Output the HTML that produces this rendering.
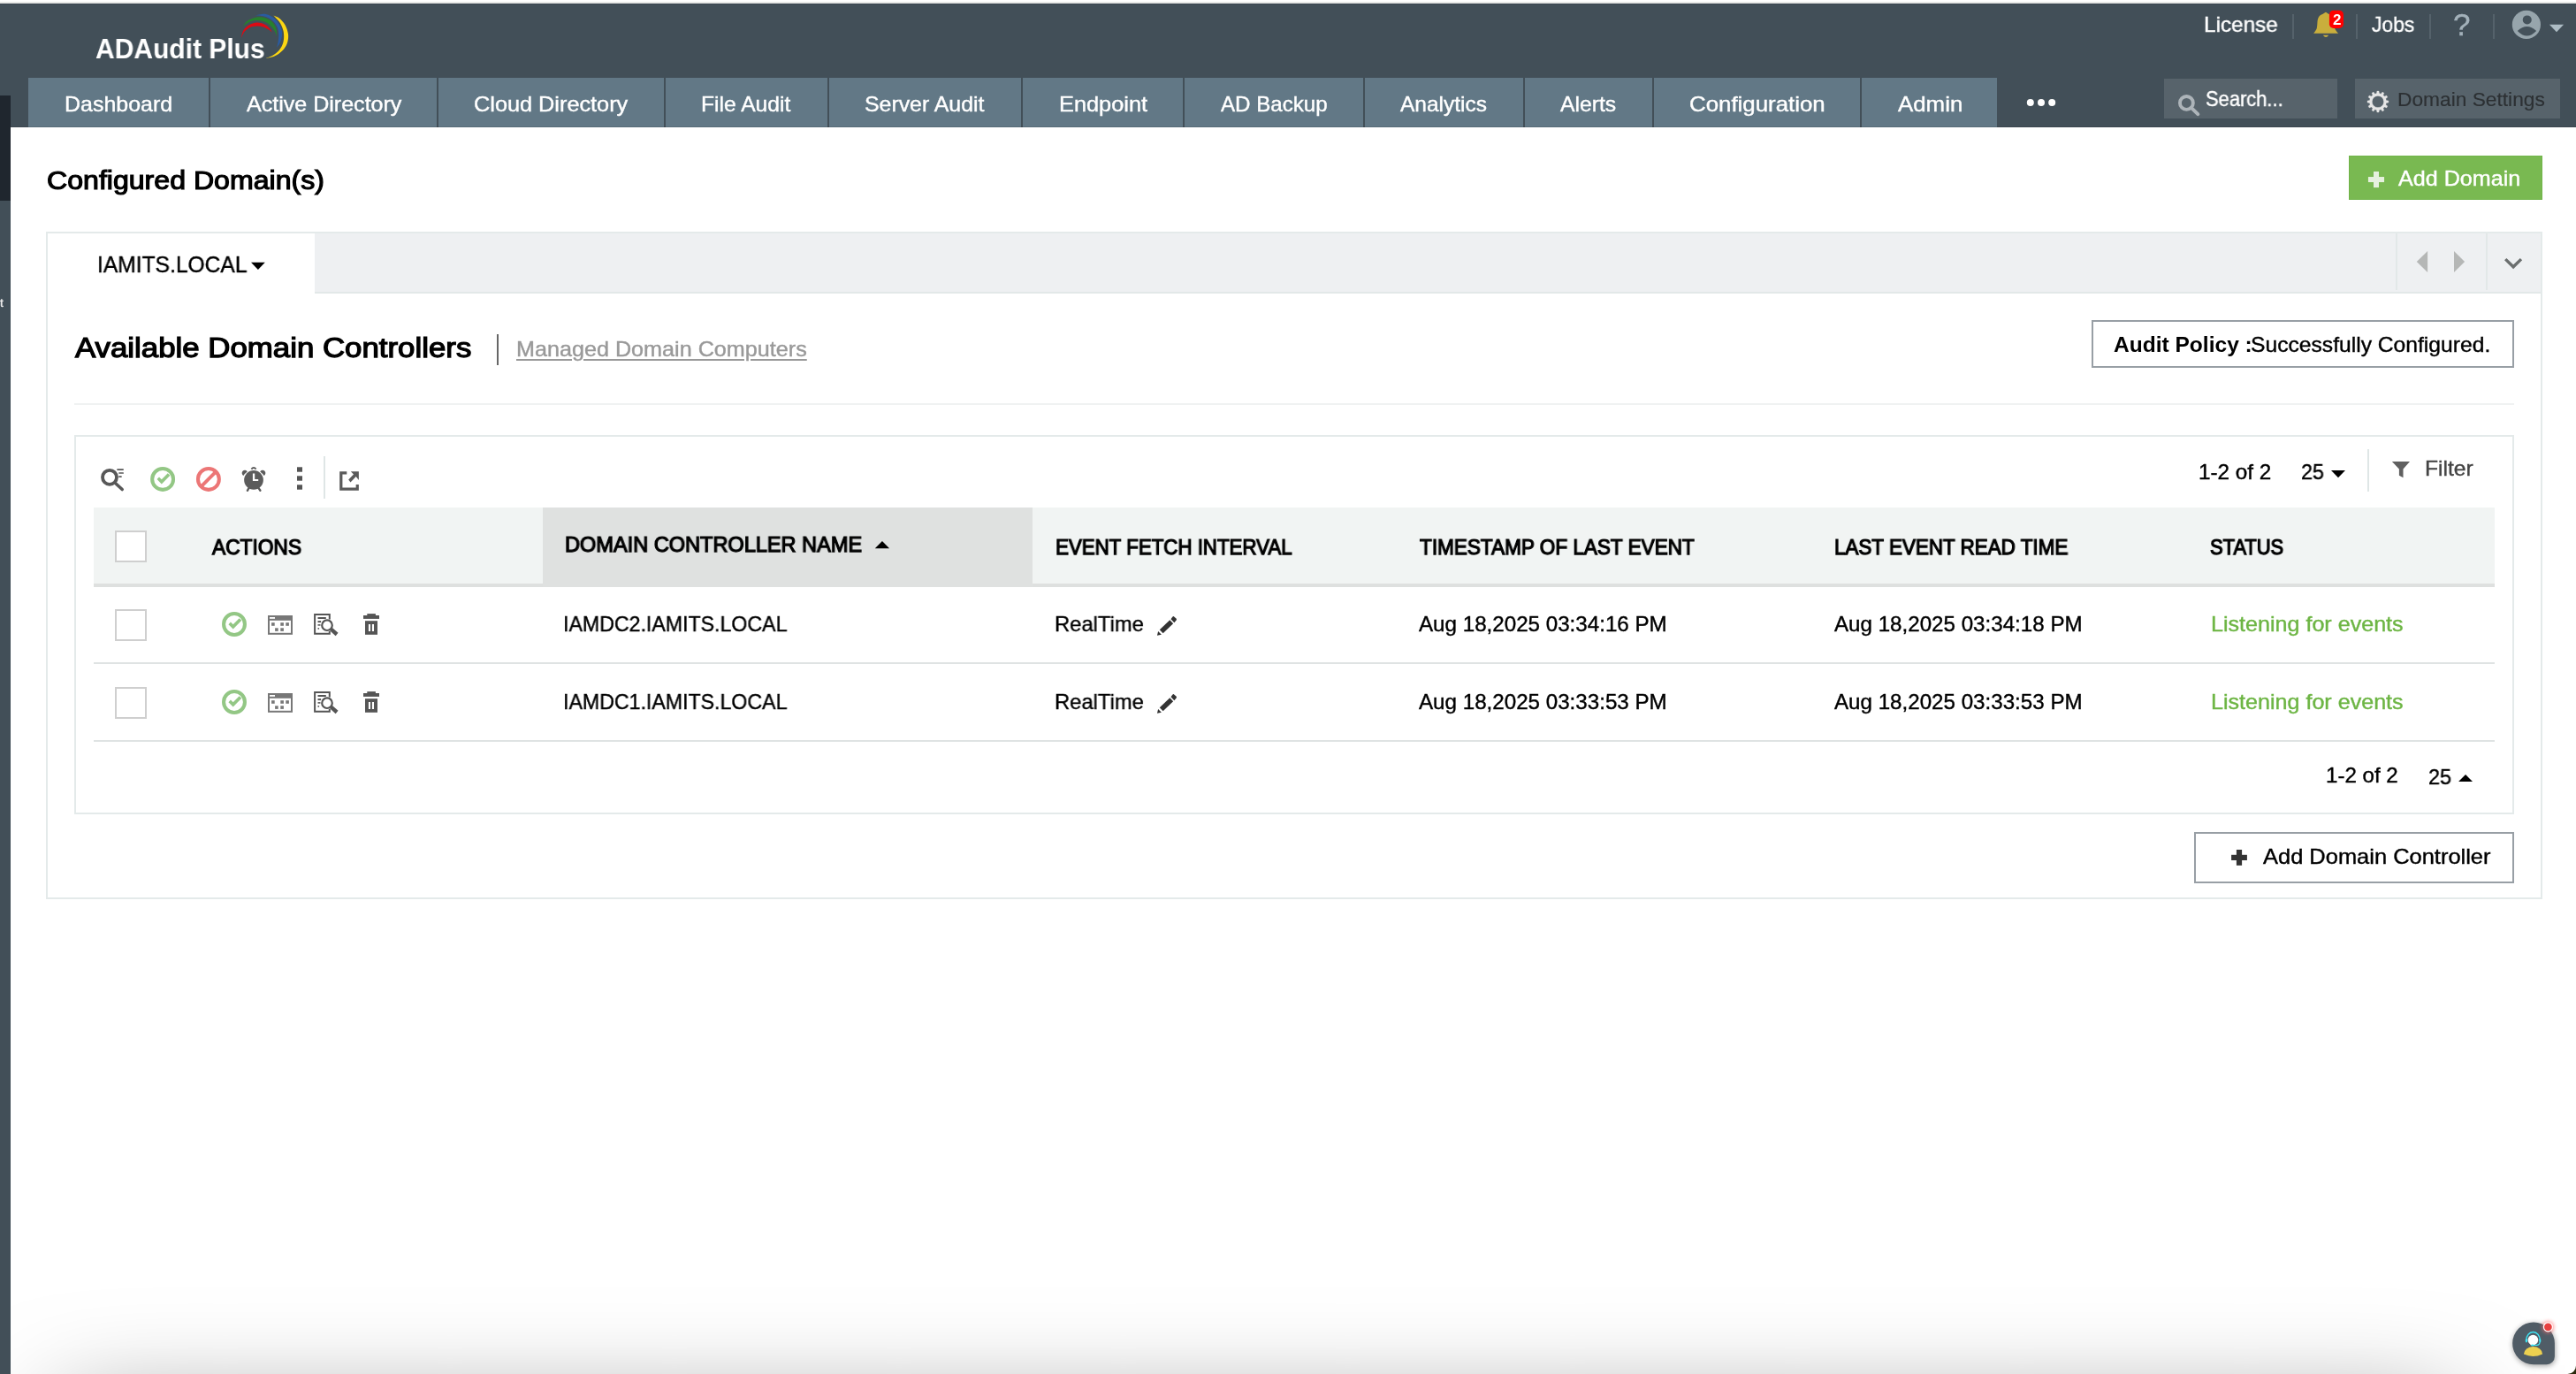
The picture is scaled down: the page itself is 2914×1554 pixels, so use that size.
<!DOCTYPE html>
<html lang="en">
<head>
<meta charset="utf-8">
<title>ADAudit Plus - Configured Domain(s)</title>
<style>
html,body{margin:0;padding:0;}
html,body{width:2914px;height:1554px;overflow:hidden;background:#fff;}
#page{position:relative;width:2914px;height:1554px;overflow:hidden;background:#fff;font-family:"Liberation Sans",sans-serif;color:#000;}
.a{position:absolute;}
.t{position:absolute;white-space:nowrap;margin:0;padding:0;font-weight:400;will-change:transform;}
svg{position:absolute;overflow:visible;}
</style>
</head>
<body>
<div id="page">
<!-- top browser edge -->
<div class="a" style="left:0;top:0;width:2914px;height:2px;background:#fff"></div>
<div class="a" style="left:0;top:2px;width:2914px;height:2px;background:#e8e9e7"></div>
<!-- header -->
<div id="header" class="a" style="left:0;top:4px;width:2914px;height:140px;background:#424f58;border-top:1px solid #3a4650;box-sizing:border-box"></div>
<!-- left strip (other window sliver) -->
<div class="a" style="left:0;top:144px;width:12px;height:1410px;background:#424f58"></div>
<div class="a" style="left:0;top:108px;width:12px;height:119px;background:#1f262e"></div>
<!-- nav -->
<div id="nav" class="a" style="left:32px;top:88px;width:2227px;height:56px;background:#627886"></div>
<div class="a" style="left:236px;top:88px;width:2px;height:56px;background:#424f58"></div>
<div class="a" style="left:494px;top:88px;width:2px;height:56px;background:#424f58"></div>
<div class="a" style="left:751px;top:88px;width:2px;height:56px;background:#424f58"></div>
<div class="a" style="left:936px;top:88px;width:2px;height:56px;background:#424f58"></div>
<div class="a" style="left:1155px;top:88px;width:2px;height:56px;background:#424f58"></div>
<div class="a" style="left:1338px;top:88px;width:2px;height:56px;background:#424f58"></div>
<div class="a" style="left:1542px;top:88px;width:2px;height:56px;background:#424f58"></div>
<div class="a" style="left:1723px;top:88px;width:2px;height:56px;background:#424f58"></div>
<div class="a" style="left:1869px;top:88px;width:2px;height:56px;background:#424f58"></div>
<div class="a" style="left:2104px;top:88px;width:2px;height:56px;background:#424f58"></div>
<div class="a" style="left:12px;top:143px;width:2902px;height:1px;background:rgba(0,0,0,0.10)"></div>
<!-- more dots -->
<div class="a" style="left:2305px;top:111.8px;width:8.2px;height:8.2px;border-radius:50%;background:#fff;box-shadow:-12.2px 0 0 #fff,12.2px 0 0 #fff"></div>
<!-- search box & domain settings -->
<div class="a" style="left:2448px;top:89px;width:196px;height:45px;background:#57636b"></div>
<div class="a" style="left:2664px;top:89px;width:232px;height:45px;background:#57636b"></div>
<!-- header separators -->
<div class="a" style="left:2593px;top:16px;width:2px;height:28px;background:#55626b"></div>
<div class="a" style="left:2665px;top:16px;width:2px;height:28px;background:#55626b"></div>
<div class="a" style="left:2748px;top:16px;width:2px;height:28px;background:#55626b"></div>
<div class="a" style="left:2820px;top:16px;width:2px;height:28px;background:#55626b"></div>
<!--ICONS_HEADER-->

<!-- Add Domain button -->
<div class="a" style="left:2657px;top:176px;width:219px;height:50px;background:#79b951;border:1px solid #70b449;box-sizing:border-box"></div>

<!-- outer panel -->
<div class="a" style="left:52px;top:262px;width:2820px;height:751px;border:2px solid #e4eaea;background:#fff"></div>
<div class="a" style="left:356px;top:264px;width:2518px;height:66px;background:#eef0f2;border-bottom:2px solid #e2e8e8"></div>
<div class="a" style="left:2710px;top:264px;width:2px;height:64px;background:#e2e8e8"></div>
<div class="a" style="left:2812px;top:264px;width:2px;height:64px;background:#e2e8e8"></div>

<!-- title divider -->
<div class="a" style="left:562px;top:378px;width:2px;height:34.5px;background:#666"></div>
<!-- audit policy box -->
<div class="a" style="left:2366px;top:362px;width:474px;height:50px;border:2px solid #989fa5;background:#fff"></div>
<!-- hr -->
<div class="a" style="left:84px;top:456px;width:2760px;height:2px;background:#f0f2f2"></div>
<!-- inner panel -->
<div class="a" style="left:84px;top:492px;width:2756px;height:425px;border:2px solid #e4eaea;background:#fff"></div>
<!-- toolbar separators -->
<div class="a" style="left:366px;top:516px;width:2px;height:48px;background:#dfe6e6"></div>
<div class="a" style="left:2678px;top:508px;width:2px;height:48px;background:#dfe6e6"></div>
<!-- table header -->
<div class="a" style="left:106px;top:574px;width:2716px;height:86px;background:#f1f4f3"></div>
<div class="a" style="left:106px;top:660px;width:2716px;height:4px;background:#dee0df"></div>
<div class="a" style="left:614px;top:574px;width:554px;height:90px;background:#dfe1e0"></div>
<!-- row lines -->
<div class="a" style="left:106px;top:749px;width:2716px;height:2px;background:#dfe3e3"></div>
<div class="a" style="left:106px;top:837px;width:2716px;height:2px;background:#dfe3e3"></div>
<!-- checkboxes -->
<div class="a" style="left:130px;top:600px;width:32px;height:32px;border:2px solid #cfcfcf;background:#fff"></div>
<div class="a" style="left:130px;top:689px;width:32px;height:32px;border:2px solid #cfcfcf;background:#fff"></div>
<div class="a" style="left:130px;top:777px;width:32px;height:32px;border:2px solid #cfcfcf;background:#fff"></div>
<!-- add dc button -->
<div class="a" style="left:2482px;top:941px;width:358px;height:54px;border:2px solid #989fa5;background:#fff"></div>
<!-- bottom shadow -->
<div class="a" style="left:70px;top:1600px;width:2705px;height:100px;background:#888;box-shadow:0 0 120px rgba(0,0,0,0.51)"></div>
<div class="a" style="left:0;top:1400px;width:12px;height:154px;background:#424f58"></div>
<svg width="2914" height="1554" viewBox="0 0 2914 1554" style="left:0;top:0">
<g id="logo-arcs"><path d="M272.74,43.16 C273.16,41.72 273.84,36.96 275.29,34.50 C276.73,32.03 278.85,29.87 281.40,28.38 C283.95,26.90 287.69,25.75 290.57,25.58 C293.46,25.41 296.35,26.30 298.73,27.36 C301.10,28.42 303.31,30.42 304.84,31.95 C306.37,33.48 307.39,35.77 307.90,36.54 C307.22,36.03 305.52,34.50 303.82,33.48 C302.12,32.46 299.92,31.10 297.71,30.42 C295.50,29.74 293.04,29.32 290.57,29.40 C288.11,29.49 285.22,29.91 282.93,30.93 C280.64,31.95 278.51,33.48 276.82,35.52 C275.12,37.55 273.42,41.89 272.74,43.16 Z" fill="#dc0a14"/>
<path d="M274.78,29.91 C275.71,28.81 277.75,25.03 280.38,23.29 C283.01,21.55 287.18,19.93 290.57,19.46 C293.97,19.00 297.79,19.51 300.76,20.48 C303.74,21.46 306.45,23.24 308.41,25.32 C310.36,27.41 311.72,30.25 312.48,32.97 C313.25,35.69 312.91,40.19 312.99,41.63 C312.74,40.78 312.40,38.40 311.46,36.54 C310.53,34.67 309.26,32.33 307.39,30.42 C305.52,28.51 303.06,26.30 300.25,25.07 C297.45,23.84 293.55,23.07 290.57,23.03 C287.60,22.99 285.05,23.67 282.42,24.82 C279.79,25.96 276.05,29.06 274.78,29.91 Z" fill="#26812d"/>
<path d="M289.04,17.17 C291.00,16.96 297.11,15.22 300.76,15.90 C304.42,16.58 308.15,18.74 310.96,21.25 C313.76,23.75 316.22,27.87 317.58,30.93 C318.94,33.99 319.28,36.62 319.11,39.59 C318.94,42.56 317.58,46.39 316.56,48.76 C315.54,51.14 313.59,53.01 312.99,53.86 C313.25,52.84 314.14,50.12 314.52,47.75 C314.90,45.37 315.41,42.39 315.29,39.59 C315.16,36.79 314.90,33.61 313.76,30.93 C312.61,28.25 310.57,25.54 308.41,23.54 C306.24,21.55 303.99,20.02 300.76,18.96 C297.54,17.89 291.00,17.47 289.04,17.17 Z" fill="#2a5ba0"/>
<path d="M309.43,17.43 C310.53,17.98 313.84,18.91 316.05,20.74 C318.26,22.56 321.02,25.41 322.68,28.38 C324.33,31.35 325.56,35.35 325.99,38.57 C326.41,41.80 326.03,44.94 325.22,47.75 C324.42,50.55 323.10,53.01 321.15,55.39 C319.19,57.77 316.05,60.40 313.50,62.01 C310.96,63.63 307.98,64.43 305.86,65.07 C303.74,65.71 301.61,65.71 300.76,65.83 C302.04,65.32 305.86,64.35 308.41,62.78 C310.96,61.21 314.10,58.74 316.05,56.41 C318.00,54.07 319.28,51.31 320.13,48.76 C320.98,46.22 321.15,43.67 321.15,41.12 C321.15,38.57 320.98,36.20 320.13,33.48 C319.28,30.76 317.83,27.49 316.05,24.82 C314.27,22.14 310.53,18.66 309.43,17.43 Z" fill="#fcd612"/></g>
<g id="bell"><path d="M2617.11,37.85 C2617.65,37.06 2619.68,34.82 2620.38,33.12 C2621.08,31.42 2621.05,29.48 2621.29,27.66 C2621.53,25.84 2621.38,23.84 2621.84,22.20 C2622.29,20.56 2623.05,18.92 2624.02,17.83 C2624.99,16.74 2626.81,16.13 2627.66,15.65 C2628.51,15.16 2628.57,15.23 2629.12,14.92 C2629.66,14.60 2630.33,13.75 2630.94,13.75 C2631.54,13.75 2632.21,14.60 2632.76,14.92 C2633.30,15.23 2633.36,15.16 2634.21,15.65 C2635.06,16.13 2636.88,16.74 2637.85,17.83 C2638.82,18.92 2639.58,20.56 2640.04,22.20 C2640.49,23.84 2640.34,25.84 2640.58,27.66 C2640.82,29.48 2640.73,31.42 2641.49,33.12 C2642.25,34.82 2644.53,37.06 2645.13,37.85 Z" fill="#c9ae3c"/><path d="M2627.84,39.67 L2634.21,39.67 Q2631.01,44.40 2627.84,39.67 Z" fill="#c9ae3c"/><rect x="2634.9" y="11.8" width="16.1" height="20.2" rx="4.8" ry="4.8" fill="#ff0000"/></g>
<g id="user"><circle cx="2857.9" cy="27.9" r="16.1" fill="#97a5ac"/><circle cx="2858.75" cy="22.4" r="5" fill="#45525b"/><path d="M2847.8,34.9 Q2858.5,25.1 2869.1,34.9 Q2858.5,45.9 2847.8,34.9 Z" fill="#45525b"/><path d="M2883.9,27.8 L2900.1,27.8 L2892,36.2 Z" fill="#adbcc4"/></g>
<g id="hsearch"><circle cx="2473.4" cy="116.4" r="7.45" fill="none" stroke="#adb4b9" stroke-width="3.9"/><path d="M2479.3,122.3 L2486.3,129.2" stroke="#adb4b9" stroke-width="4" stroke-linecap="round" fill="none"/></g>
<g id="gear"><path d="M2688.46,105.62 L2688.88,103.05 L2691.02,103.05 L2691.44,105.62 L2693.35,106.13 L2695.00,104.12 L2696.85,105.18 L2695.93,107.62 L2697.33,109.02 L2699.77,108.10 L2700.83,109.95 L2698.82,111.60 L2699.33,113.51 L2701.90,113.93 L2701.90,116.07 L2699.33,116.49 L2698.82,118.40 L2700.83,120.05 L2699.77,121.90 L2697.33,120.98 L2695.93,122.38 L2696.85,124.82 L2695.00,125.88 L2693.35,123.87 L2691.44,124.38 L2691.02,126.95 L2688.88,126.95 L2688.46,124.38 L2686.55,123.87 L2684.90,125.88 L2683.05,124.82 L2683.97,122.38 L2682.57,120.98 L2680.13,121.90 L2679.07,120.05 L2681.08,118.40 L2680.57,116.49 L2678.00,116.07 L2678.00,113.93 L2680.57,113.51 L2681.08,111.60 L2679.07,109.95 L2680.13,108.10 L2682.57,109.02 L2683.97,107.62 L2683.05,105.18 L2684.90,104.12 L2686.55,106.13 Z M2696.55,115.00 A6.6,6.6 0 1 0 2683.35,115.00 A6.6,6.6 0 1 0 2696.55,115.00 Z" fill="#e6e6e6" fill-rule="evenodd" stroke="#e6e6e6" stroke-width="0.3" stroke-linejoin="round"/></g>
<g id="plus-w"><rect x="2678.95" y="200.05" width="18.10" height="6.00" fill="#e6f1de"/><rect x="2685.00" y="194.00" width="6.00" height="18.10" fill="#e6f1de"/></g>
<path d="M284.00,296.80 L299.80,296.80 L291.90,305.00 Z" fill="#000"/>
<path d="M2746.10,284.00 L2746.10,308.00 L2733.80,296.00 Z" fill="#b5b7b6"/>
<path d="M2776.00,284.00 L2776.00,308.00 L2788.10,296.00 Z" fill="#b5b7b6"/>
<path d="M2834.2,293.1 L2843.1,301.8 L2852.0,293.1" fill="none" stroke="#6b6f6f" stroke-width="3.4"/>
<g id="tsearch"><circle cx="124.0" cy="539.85" r="8.0" fill="none" stroke="#585858" stroke-width="3.8"/><path d="M130.0,546.0 L138.2,553.5" stroke="#585858" stroke-width="3.6" stroke-linecap="round"/><rect x="132.2" y="530.2" width="7.7" height="1.7" rx="0.6" fill="#585858"/><rect x="134.2" y="534.2" width="5.7" height="1.6" rx="0.6" fill="#585858"/><rect x="134.2" y="538.3" width="3.6" height="1.6" rx="0.6" fill="#585858"/></g>
<circle cx="184.1" cy="541.9" r="11.95" fill="none" stroke="#93c785" stroke-width="4.05"/><path d="M177.55,542.05 L180.02,539.43 L182.79,542.19 L189.78,535.20 L192.40,537.68 L182.79,547.43 Z" fill="#93c785"/>
<circle cx="235.9" cy="541.9" r="11.95" fill="none" stroke="#ec7676" stroke-width="4.05"/><path d="M227.45,550.35 L244.35,533.45" stroke="#ec7676" stroke-width="3.9"/>
<circle cx="287.0" cy="542.9" r="10.85" fill="#5c5c5c"/><path d="M279.80,533.40 A3.3,3.3 0 1 0 275.40,538.00 Q277.10,535.20 279.80,533.40 Z" fill="#5c5c5c"/><path d="M294.20,533.40 A3.3,3.3 0 1 1 298.60,538.00 Q296.90,535.20 294.20,533.40 Z" fill="#5c5c5c"/><path d="M284.40,530.60 Q287.00,527.30 289.60,530.60" fill="none" stroke="#5c5c5c" stroke-width="2.0"/><path d="M281.60,551.90 L279.90,554.80" stroke="#5c5c5c" stroke-width="2.4" stroke-linecap="round"/><path d="M292.40,551.90 L294.40,554.80" stroke="#5c5c5c" stroke-width="2.4" stroke-linecap="round"/><path d="M285.90,535.50 h2.3 v6.4 h4.0 v2.2 h-6.3 Z" fill="#fff"/>
<rect x="336" y="528.3" width="6" height="5.4" fill="#555"/><rect x="336" y="538.3" width="6" height="5.4" fill="#555"/><rect x="336" y="548.3" width="6" height="5.4" fill="#555"/>
<path d="M384.17,533.17 H392.3 V536.5 H387.4 V551.5 H402.66 V548.0 H405.86 V554.86 H384.17 Z" fill="#5a5a5a"/><path d="M396.8,533.17 L405.86,533.17 L405.86,542.9 L402.7,539.1 L396.5,545.5 L394.2,542.5 L400.0,536.5 Z" fill="#5a5a5a"/>
<path d="M989.80,620.20 L1006.10,620.20 L997.95,612.00 Z" fill="#000"/>
<path d="M2637.00,531.90 L2653.00,531.90 L2645.00,540.20 Z" fill="#000"/>
<path d="M2781.10,884.10 L2797.00,884.10 L2789.05,875.90 Z" fill="#000"/>
<path d="M2705.9,521.9 L2726,521.9 L2718.5,530.5 L2718.5,540.2 L2713.9,537.7 L2713.9,530.5 Z" fill="#606060"/>
<circle cx="265.0" cy="706.0" r="11.95" fill="none" stroke="#93c785" stroke-width="4.05"/><path d="M258.45,706.15 L260.92,703.53 L263.69,706.29 L270.68,699.30 L273.30,701.78 L263.69,711.53 Z" fill="#93c785"/>
<rect x="304" y="697" width="26" height="19.8" fill="#fff" stroke="#777" stroke-width="2"/><rect x="303" y="696" width="28" height="5.8" fill="#777"/><rect x="305" y="698" width="6" height="1.8" fill="#fff"/><rect x="307.1" y="704.2" width="3.6" height="3.6" fill="#777"/><rect x="317.3" y="704.2" width="3.6" height="3.6" fill="#777"/><rect x="323.3" y="704.2" width="3.6" height="3.6" fill="#777"/><rect x="311.1" y="710.3" width="3.6" height="3.6" fill="#777"/><rect x="317.3" y="710.3" width="3.6" height="3.6" fill="#777"/>
<path d="M372.80,700.60 L372.80,695.10 L356.10,695.10 L356.10,716.80 L372.80,716.80 L372.80,714.10" fill="none" stroke="#555" stroke-width="2"/><rect x="359.50" y="698.00" width="9.3" height="2.0" fill="#555"/><rect x="359.50" y="702.10" width="3.6" height="2.0" fill="#555"/><rect x="359.50" y="706.10" width="3.0" height="1.6" fill="#555"/><rect x="359.50" y="710.10" width="1.6" height="1.6" fill="#555"/><circle cx="370.00" cy="707.20" r="5.8" fill="#fff" stroke="#555" stroke-width="2.2"/><path d="M374.50,711.70 L381.10,717.50" stroke="#555" stroke-width="4.4"/>
<rect x="415.30" y="694.10" width="9.6" height="2.2" fill="#555"/><rect x="411.00" y="696.00" width="18" height="3.9" fill="#555"/><rect x="413.00" y="702.20" width="14" height="15.6" fill="#555"/><rect x="416.90" y="706.00" width="2.1" height="8" fill="#fff"/><rect x="420.90" y="706.00" width="2.1" height="8" fill="#fff"/>
<path d="M1308.96,718.86 L1310.16,713.99 L1313.91,717.75 Z" fill="#333"/><path d="M1311.78,712.28 L1323.31,701.35 L1327.15,705.37 L1315.62,716.30 Z" fill="#333"/><path d="M1324.50,700.24 L1326.47,697.51 L1327.58,697.08 L1330.74,699.81 L1330.99,700.92 L1328.35,704.17 Z" fill="#333"/>
<circle cx="265.0" cy="794.0" r="11.95" fill="none" stroke="#93c785" stroke-width="4.05"/><path d="M258.45,794.15 L260.92,791.53 L263.69,794.29 L270.68,787.30 L273.30,789.78 L263.69,799.53 Z" fill="#93c785"/>
<rect x="304" y="785" width="26" height="19.8" fill="#fff" stroke="#777" stroke-width="2"/><rect x="303" y="784" width="28" height="5.8" fill="#777"/><rect x="305" y="786" width="6" height="1.8" fill="#fff"/><rect x="307.1" y="792.2" width="3.6" height="3.6" fill="#777"/><rect x="317.3" y="792.2" width="3.6" height="3.6" fill="#777"/><rect x="323.3" y="792.2" width="3.6" height="3.6" fill="#777"/><rect x="311.1" y="798.3" width="3.6" height="3.6" fill="#777"/><rect x="317.3" y="798.3" width="3.6" height="3.6" fill="#777"/>
<path d="M372.80,788.60 L372.80,783.10 L356.10,783.10 L356.10,804.80 L372.80,804.80 L372.80,802.10" fill="none" stroke="#555" stroke-width="2"/><rect x="359.50" y="786.00" width="9.3" height="2.0" fill="#555"/><rect x="359.50" y="790.10" width="3.6" height="2.0" fill="#555"/><rect x="359.50" y="794.10" width="3.0" height="1.6" fill="#555"/><rect x="359.50" y="798.10" width="1.6" height="1.6" fill="#555"/><circle cx="370.00" cy="795.20" r="5.8" fill="#fff" stroke="#555" stroke-width="2.2"/><path d="M374.50,799.70 L381.10,805.50" stroke="#555" stroke-width="4.4"/>
<rect x="415.30" y="782.10" width="9.6" height="2.2" fill="#555"/><rect x="411.00" y="784.00" width="18" height="3.9" fill="#555"/><rect x="413.00" y="790.20" width="14" height="15.6" fill="#555"/><rect x="416.90" y="794.00" width="2.1" height="8" fill="#fff"/><rect x="420.90" y="794.00" width="2.1" height="8" fill="#fff"/>
<path d="M1308.96,806.86 L1310.16,801.99 L1313.91,805.75 Z" fill="#333"/><path d="M1311.78,800.28 L1323.31,789.35 L1327.15,793.37 L1315.62,804.30 Z" fill="#333"/><path d="M1324.50,788.24 L1326.47,785.51 L1327.58,785.08 L1330.74,787.81 L1330.99,788.92 L1328.35,792.17 Z" fill="#333"/>
<g id="plus-d"><rect x="2524.10" y="966.80" width="17.80" height="6.20" fill="#333"/><rect x="2529.90" y="961.00" width="6.20" height="17.80" fill="#333"/></g>
<g id="chat"><defs><filter id="sh" x="-50%" y="-50%" width="200%" height="200%"><feGaussianBlur stdDeviation="2.2"/></filter><filter id="sh2" x="-50%" y="-50%" width="200%" height="200%"><feGaussianBlur stdDeviation="3.2"/></filter></defs><path d="M2866.03,1495.45 A23.88,23.88 0 0 1 2889.90,1519.33 L2889.90,1534.20 A9.00,9.00 0 0 1 2880.90,1543.20 L2866.03,1543.20 A23.88,23.88 0 0 1 2842.15,1519.33 A23.88,23.88 0 0 1 2866.03,1495.45 Z" fill="#000" opacity="0.38" filter="url(#sh2)" transform="translate(0.5,1.5)"/><path d="M2866.03,1495.45 A23.88,23.88 0 0 1 2889.90,1519.33 L2889.90,1534.20 A9.00,9.00 0 0 1 2880.90,1543.20 L2866.03,1543.20 A23.88,23.88 0 0 1 2842.15,1519.33 A23.88,23.88 0 0 1 2866.03,1495.45 Z" fill="#505c66"/><path d="M2857.70,1515.90 A7.8,9.4 0 0 1 2873.30,1515.90" fill="none" stroke="#3ee6f6" stroke-width="1.3"/><ellipse cx="2857.90" cy="1516.20" rx="1.15" ry="2.4" fill="#3ee6f6"/><ellipse cx="2873.30" cy="1516.20" rx="1.0" ry="2.4" fill="#3ee6f6"/><path d="M2873.10,1518.10 Q2872.60,1521.40 2869.90,1521.40 L2863.80,1521.40" fill="none" stroke="#3ee6f6" stroke-width="1.1"/><ellipse cx="2864.80" cy="1521.30" rx="1.7" ry="0.9" fill="#3ee6f6"/><circle cx="2865.40" cy="1515.50" r="5.8" fill="#fff"/><path d="M2861.90,1519.30 L2862.80,1521.50 L2864.90,1520.50 Z" fill="#fff"/><ellipse cx="2864.80" cy="1521.40" rx="1.7" ry="0.85" fill="#3ee6f6"/><path d="M2854.9,1531.6 A10.6,8.4 0 0 1 2876.1,1531.4 Q2865.5,1536.4 2854.9,1531.6 Z" fill="#ecd050"/><circle cx="2882.40" cy="1500.80" r="6.6" fill="#ff7070" filter="url(#sh)" opacity="0.75"/><circle cx="2882.40" cy="1500.80" r="5.6" fill="#fff"/><circle cx="2882.40" cy="1500.80" r="4.4" fill="#e84040"/></g>
<path d="M2914,1544.5 A9.5,9.5 0 0 1 2904.5,1554 L2914,1554 Z" fill="#2a2a0c"/>
</svg>
<span class="t" style="left:107.50px;top:37.00px;font-size:31px;line-height:37px;font-weight:700;color:#fff;transform:scaleX(0.9679);transform-origin:0 0;">ADAudit Plus</span>
<span class="t" style="left:73.06px;top:102.80px;font-size:24px;line-height:29px;color:#fff;transform:scaleX(1.0403);transform-origin:0 0;-webkit-text-stroke:0.4px #fff;">Dashboard</span>
<span class="t" style="left:278.70px;top:102.80px;font-size:24px;line-height:29px;color:#fff;transform:scaleX(1.0438);transform-origin:0 0;-webkit-text-stroke:0.4px #fff;">Active Directory</span>
<span class="t" style="left:535.65px;top:102.80px;font-size:24px;line-height:29px;color:#fff;transform:scaleX(1.0536);transform-origin:0 0;-webkit-text-stroke:0.4px #fff;">Cloud Directory</span>
<span class="t" style="left:792.67px;top:102.80px;font-size:24px;line-height:29px;color:#fff;transform:scaleX(1.0254);transform-origin:0 0;-webkit-text-stroke:0.4px #fff;">File Audit</span>
<span class="t" style="left:977.76px;top:102.80px;font-size:24px;line-height:29px;color:#fff;transform:scaleX(1.0358);transform-origin:0 0;-webkit-text-stroke:0.4px #fff;">Server Audit</span>
<span class="t" style="left:1197.54px;top:102.80px;font-size:24px;line-height:29px;color:#fff;transform:scaleX(1.0555);transform-origin:0 0;-webkit-text-stroke:0.4px #fff;">Endpoint</span>
<span class="t" style="left:1380.70px;top:102.80px;font-size:24px;line-height:29px;color:#fff;transform:scaleX(1.0049);transform-origin:0 0;-webkit-text-stroke:0.4px #fff;">AD Backup</span>
<span class="t" style="left:1583.80px;top:102.80px;font-size:24px;line-height:29px;color:#fff;transform:scaleX(1.0194);transform-origin:0 0;-webkit-text-stroke:0.4px #fff;">Analytics</span>
<span class="t" style="left:1764.90px;top:102.80px;font-size:24px;line-height:29px;color:#fff;transform:scaleX(1.0286);transform-origin:0 0;-webkit-text-stroke:0.4px #fff;">Alerts</span>
<span class="t" style="left:1910.72px;top:102.80px;font-size:24px;line-height:29px;color:#fff;transform:scaleX(1.0768);transform-origin:0 0;-webkit-text-stroke:0.4px #fff;">Configuration</span>
<span class="t" style="left:2146.60px;top:102.80px;font-size:24px;line-height:29px;color:#fff;transform:scaleX(1.0768);transform-origin:0 0;-webkit-text-stroke:0.4px #fff;">Admin</span>
<span class="t" style="left:2492.92px;top:13.00px;font-size:24.5px;line-height:29px;color:#fff;transform:scaleX(0.9924);transform-origin:0 0;-webkit-text-stroke:0.4px #fff;">License</span>
<span class="t" style="left:2683.20px;top:13.00px;font-size:24.5px;line-height:29px;color:#fff;transform:scaleX(0.9320);transform-origin:0 0;-webkit-text-stroke:0.4px #fff;">Jobs</span>
<span class="t" style="left:2775.20px;top:6.50px;font-size:35px;line-height:42px;color:#a3b1ba;-webkit-text-stroke:0.4px #a3b1ba;">?</span>
<span class="t" style="left:2638.80px;top:12.50px;font-size:17px;line-height:20px;font-weight:700;color:#fff;">2</span>
<span class="t" style="left:2495.45px;top:97.80px;font-size:23px;line-height:28px;color:#fff;transform:scaleX(0.9525);transform-origin:0 0;-webkit-text-stroke:0.4px #fff;">Search...</span>
<span class="t" style="left:2712.26px;top:98.80px;font-size:22.5px;line-height:27px;color:#2c3033;transform:scaleX(1.0105);transform-origin:0 0;-webkit-text-stroke:0.15px #2c3033;">Domain Settings</span>
<h1 class="t" style="left:52.83px;top:186.20px;font-size:30px;line-height:36px;color:#000;transform:scaleX(1.0698);transform-origin:0 0;-webkit-text-stroke:1.2px #000;">Configured Domain(s)</h1>
<span class="t" style="left:2713.00px;top:187.00px;font-size:24.5px;line-height:29px;color:#fff;transform:scaleX(1.0261);transform-origin:0 0;-webkit-text-stroke:0.4px #fff;">Add Domain</span>
<span class="t" style="left:110.41px;top:283.50px;font-size:26px;line-height:31px;color:#000;transform:scaleX(0.9463);transform-origin:0 0;-webkit-text-stroke:0.4px #000;">IAMITS.LOCAL</span>
<h2 class="t" style="left:84.62px;top:374.80px;font-size:31px;line-height:37px;color:#000;transform:scaleX(1.1231);transform-origin:0 0;-webkit-text-stroke:1.25px #000;">Available Domain Controllers</h2>
<span class="t" style="left:584.15px;top:380.00px;font-size:24px;line-height:29px;color:#999;transform:scaleX(1.0487);transform-origin:0 0;-webkit-text-stroke:0.4px #999;text-decoration:underline;text-underline-offset:3px;text-decoration-thickness:2px;">Managed Domain Computers</span>
<span class="t" style="left:2391.40px;top:374.70px;font-size:24.5px;line-height:29px;font-weight:700;color:#000;transform:scaleX(1.0015);transform-origin:0 0;">Audit Policy :</span>
<span class="t" style="left:2546.49px;top:374.70px;font-size:24.5px;line-height:29px;color:#000;transform:scaleX(1.0059);transform-origin:0 0;-webkit-text-stroke:0.4px #000;">Successfully Configured.</span>
<span class="t" style="left:2486.69px;top:518.60px;font-size:24px;line-height:29px;color:#000;transform:scaleX(1.0120);transform-origin:0 0;-webkit-text-stroke:0.4px #000;">1-2 of 2</span>
<span class="t" style="left:2602.73px;top:518.60px;font-size:24px;line-height:29px;color:#000;transform:scaleX(0.9744);transform-origin:0 0;-webkit-text-stroke:0.4px #000;">25</span>
<span class="t" style="left:2742.77px;top:514.70px;font-size:24px;line-height:29px;color:#444;transform:scaleX(1.0260);transform-origin:0 0;-webkit-text-stroke:0.4px #444;">Filter</span>
<span class="t" style="left:239.62px;top:604.00px;font-size:24px;line-height:29px;color:#000;transform:scaleX(0.9468);transform-origin:0 0;-webkit-text-stroke:1.25px #000;">ACTIONS</span>
<span class="t" style="left:638.84px;top:601.00px;font-size:24px;line-height:29px;color:#000;transform:scaleX(0.9808);transform-origin:0 0;-webkit-text-stroke:1.25px #000;">DOMAIN CONTROLLER NAME</span>
<span class="t" style="left:1193.70px;top:604.00px;font-size:24px;line-height:29px;color:#000;transform:scaleX(0.9290);transform-origin:0 0;-webkit-text-stroke:1.25px #000;">EVENT FETCH INTERVAL</span>
<span class="t" style="left:1606.33px;top:604.00px;font-size:24px;line-height:29px;color:#000;transform:scaleX(0.9395);transform-origin:0 0;-webkit-text-stroke:1.25px #000;">TIMESTAMP OF LAST EVENT</span>
<span class="t" style="left:2074.79px;top:604.00px;font-size:24px;line-height:29px;color:#000;transform:scaleX(0.9348);transform-origin:0 0;-webkit-text-stroke:1.25px #000;">LAST EVENT READ TIME</span>
<span class="t" style="left:2500.41px;top:604.00px;font-size:24px;line-height:29px;color:#000;transform:scaleX(0.9130);transform-origin:0 0;-webkit-text-stroke:1.25px #000;">STATUS</span>
<span class="t" style="left:637.47px;top:691.00px;font-size:24px;line-height:29px;color:#000;transform:scaleX(0.9648);transform-origin:0 0;-webkit-text-stroke:0.4px #000;">IAMDC2.IAMITS.LOCAL</span>
<span class="t" style="left:1193.31px;top:691.00px;font-size:24px;line-height:29px;color:#000;transform:scaleX(0.9905);transform-origin:0 0;-webkit-text-stroke:0.4px #000;">RealTime</span>
<span class="t" style="left:1604.50px;top:691.00px;font-size:24px;line-height:29px;color:#000;transform:scaleX(1.0065);transform-origin:0 0;-webkit-text-stroke:0.4px #000;">Aug 18,2025 03:34:16 PM</span>
<span class="t" style="left:2074.60px;top:691.00px;font-size:24px;line-height:29px;color:#000;transform:scaleX(1.0062);transform-origin:0 0;-webkit-text-stroke:0.4px #000;">Aug 18,2025 03:34:18 PM</span>
<span class="t" style="left:2500.65px;top:691.00px;font-size:24px;line-height:29px;color:#6db544;transform:scaleX(1.0457);transform-origin:0 0;-webkit-text-stroke:0.4px #6db544;">Listening for events</span>
<span class="t" style="left:637.47px;top:779.00px;font-size:24px;line-height:29px;color:#000;transform:scaleX(0.9648);transform-origin:0 0;-webkit-text-stroke:0.4px #000;">IAMDC1.IAMITS.LOCAL</span>
<span class="t" style="left:1193.31px;top:779.00px;font-size:24px;line-height:29px;color:#000;transform:scaleX(0.9905);transform-origin:0 0;-webkit-text-stroke:0.4px #000;">RealTime</span>
<span class="t" style="left:1604.50px;top:779.00px;font-size:24px;line-height:29px;color:#000;transform:scaleX(1.0065);transform-origin:0 0;-webkit-text-stroke:0.4px #000;">Aug 18,2025 03:33:53 PM</span>
<span class="t" style="left:2074.60px;top:779.00px;font-size:24px;line-height:29px;color:#000;transform:scaleX(1.0062);transform-origin:0 0;-webkit-text-stroke:0.4px #000;">Aug 18,2025 03:33:53 PM</span>
<span class="t" style="left:2500.65px;top:779.00px;font-size:24px;line-height:29px;color:#6db544;transform:scaleX(1.0457);transform-origin:0 0;-webkit-text-stroke:0.4px #6db544;">Listening for events</span>
<span class="t" style="left:2631.20px;top:861.80px;font-size:24px;line-height:29px;color:#000;transform:scaleX(1.0045);transform-origin:0 0;-webkit-text-stroke:0.4px #000;">1-2 of 2</span>
<span class="t" style="left:2747.32px;top:863.80px;font-size:24px;line-height:29px;color:#000;transform:scaleX(0.9784);transform-origin:0 0;-webkit-text-stroke:0.4px #000;">25</span>
<span class="t" style="left:2560.00px;top:953.80px;font-size:24px;line-height:29px;color:#000;transform:scaleX(1.0606);transform-origin:0 0;-webkit-text-stroke:0.4px #000;">Add Domain Controller</span>
<span class="t" style="left:0.20px;top:334.90px;font-size:13.5px;line-height:16px;color:#eee;-webkit-text-stroke:0.4px #eee;">t</span>
</div>
</body>
</html>
